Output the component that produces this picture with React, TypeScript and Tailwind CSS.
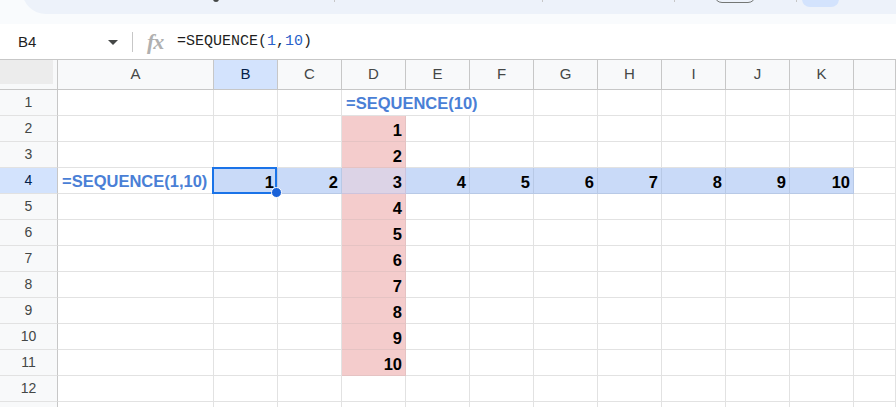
import React from 'react';

const GRID = 'grid grid-cols-[58px_156px_repeat(10,64px)_1fr]';
const COLUMNS = ['A', 'B', 'C', 'D', 'E', 'F', 'G', 'H', 'I', 'J', 'K', ''];
const ROWS = Array.from({ length: 13 }, (_, i) => i + 1);
const LAST_LABELED_ROW = 12;

// row 4 holds SEQUENCE(1,10) spilled across B:K, column D holds SEQUENCE(10) spilled down D2:D11
function cellValue(row: number, col: number): number | null {
  if (row === 4 && col >= 1 && col <= 10) return col;
  if (col === 3 && row >= 2 && row <= 11) return row - 1;
  return null;
}

function cellTone(row: number, col: number) {
  const inRow = row === 4 && col >= 1 && col <= 10;
  const inCol = col === 3 && row >= 2 && row <= 11;
  if (inRow && inCol) return 'bg-[#dcd3e6] border-[#cdc3dc]';
  if (inRow) return 'bg-[#c9daf8] border-[#b8c9e6]';
  if (inCol) return 'bg-[#f4cccc] border-[#e5c3c3]';
  return 'bg-white border-[#e2e2e2]';
}

function FormulaText({ children }: { children: React.ReactNode }) {
  return (
    <div className="flex h-[25px] items-center whitespace-nowrap pl-[4px] pt-[1px] text-[16.5px] font-bold text-[#4a7fd6]">
      {children}
    </div>
  );
}

function TopStrip() {
  return (
    <div className="h-[24px] overflow-hidden bg-[#f9fbfd]">
      <div className="-mt-[24px] ml-[22px] flex h-[38px] items-end rounded-bl-[24px] bg-[#edf2fa]">
        <div className="mb-[12px] ml-[191px] h-[3px] w-[6px] rounded-b-sm bg-[#444746]" />
        <div className="mb-[12px] ml-[115px] h-[20px] w-px bg-[#c7c7c7]" />
        <div className="mb-[12px] ml-[207px] h-[20px] w-px bg-[#c7c7c7]" />
        <div className="mb-[12px] ml-[131px] h-[20px] w-px bg-[#c7c7c7]" />
        <div className="mb-[11px] ml-[39px] h-[24px] w-[42px] rounded-[8px] border border-[#747775]" />
        <div className="mb-[12px] ml-[40px] h-[20px] w-px bg-[#c7c7c7]" />
        <div className="mb-[7px] ml-[5px] h-[28px] w-[37px] rounded-[8px] bg-[#d3e3fd]" />
      </div>
    </div>
  );
}

function FormulaBar() {
  return (
    <div className="flex h-[35px] items-center bg-white">
      <div className="flex w-[132px] items-center">
        <span className="flex-1 pl-[18px] pt-[2px] text-[15px] text-[#1f1f1f]">B4</span>
        <svg width="10" height="5" viewBox="0 0 10 5" className="mr-[14px] mt-[1px]">
          <path d="M0 0h10L5 5z" fill="#444746" />
        </svg>
      </div>
      <div className="h-[20px] w-px bg-[#c7c7c7]" />
      <span className="ml-[14px] w-[30px] pt-[1px] font-['Liberation_Serif',serif] text-[22px] font-bold italic leading-none tracking-[-1px] text-[#b0b0b0]">
        fx
      </span>
      <span className="pt-[1px] font-['Liberation_Mono',monospace] text-[15px] text-[#1f1f1f]">
        =SEQUENCE(<span className="text-[#2a5fc9]">1</span>,<span className="text-[#2a5fc9]">10</span>)
      </span>
    </div>
  );
}

function ColumnHeaders() {
  return (
    <div className={`${GRID} border-t border-[#c7c7c7]`}>
      <div className="h-[30px] border-b border-r border-[#c7c7c7] bg-[#f8f9fa]">
        <div className="h-[24px] w-[53px] bg-[#ececec]" />
      </div>
      {COLUMNS.map((c) => (
        <div
          key={c || 'L'}
          className={`flex h-[30px] items-center justify-center border-b border-r border-[#c7c7c7] text-[15px] ${
            c === 'B' ? 'bg-[#d3e3fd] text-[#041e49]' : 'bg-[#f8f9fa] text-[#444746]'
          }`}
        >
          {c}
        </div>
      ))}
    </div>
  );
}

function SheetRow({ row }: { row: number }) {
  const cells: React.ReactNode[] = [];

  COLUMNS.forEach((_, col) => {
    if (row === 1 && (col === 4 || col === 5)) return;

    const value = cellValue(row, col);
    const selected = row === 4 && col === 1;

    cells.push(
      <div
        key={col}
        className={`relative h-[26px] border-b border-r ${cellTone(row, col)} ${
          row === 1 && col === 3 ? 'col-span-3' : ''
        }`}
      >
        {row === 1 && col === 3 && <FormulaText>=SEQUENCE(10)</FormulaText>}
        {row === 4 && col === 0 && <FormulaText>=SEQUENCE(1,10)</FormulaText>}
        {value !== null && (
          <div className="pr-[3px] pt-[3px] text-right text-[16.5px] font-bold leading-[22px] text-black">
            {value}
          </div>
        )}
        {selected && (
          <>
            <div className="absolute -left-[2px] -top-[1px] z-10 h-[27px] w-[65px] border-2 border-[#1a73e8]" />
            <div className="absolute left-[57px] top-[19px] z-20 h-[11px] w-[11px] rounded-full border border-white bg-[#1a62d8]" />
          </>
        )}
      </div>
    );
  });

  return (
    <div className={GRID}>
      <div
        className={`flex h-[26px] items-center justify-center border-b border-r border-b-[#e2e2e2] border-r-[#c7c7c7] text-[14px] ${
          row === 4 ? 'bg-[#d3e3fd] text-[#041e49]' : 'bg-[#f8f9fa] text-[#444746]'
        }`}
      >
        {row <= LAST_LABELED_ROW ? row : null}
      </div>
      {cells}
    </div>
  );
}

export default function App() {
  return (
    <div className="h-[407px] w-[896px] overflow-hidden bg-white font-['Liberation_Sans',Arial,sans-serif]">
      <TopStrip />
      <FormulaBar />
      <ColumnHeaders />
      {ROWS.map((row) => (
        <SheetRow key={row} row={row} />
      ))}
    </div>
  );
}
